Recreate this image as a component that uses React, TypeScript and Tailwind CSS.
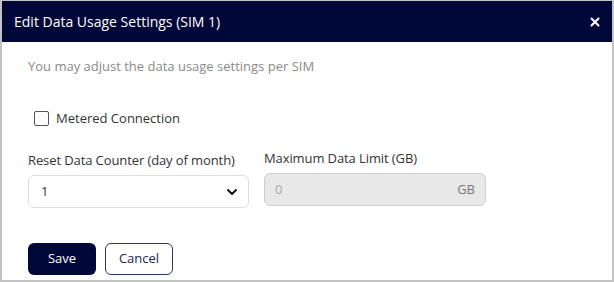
import { ChevronDown, X } from 'lucide-react';

function App() {
  return (
    <div className="w-[614px] h-[282px] bg-white border-2 border-t border-[#c3c3c3] font-['Open_Sans',sans-serif] flex flex-col">
      {/* Header */}
      <div className="h-[41px] bg-[#000839] flex items-center justify-between pl-[12px] pr-[10px] shrink-0">
        <h2 className="text-white text-[14px]">Edit Data Usage Settings (SIM 1)</h2>
        <X className="w-[14px] h-[14px] text-white" strokeWidth={3.5} />
      </div>

      {/* Body */}
      <div className="flex flex-col pl-[26px] pt-[14px]">
        <p className="text-[13px] text-[#8a8a8a] leading-[20px]">You may adjust the data usage settings per SIM</p>

        <label className="flex items-center gap-[7px] mt-[33px] ml-[6px]">
          <span className="w-[15px] h-[15px] border border-[#555] rounded-[2px] bg-white" />
          <span className="text-[13px] text-[#333] leading-[18px]">Metered Connection</span>
        </label>

        <div className="flex gap-[15px] mt-[24px]">
          <div className="flex flex-col w-[221px]">
            <span className="text-[13px] text-[#333] leading-[18px] tracking-[-0.1px]">Reset Data Counter (day of month)</span>
            <div className="mt-[6px] h-[33px] border border-[#dedede] rounded-[6px] flex items-center justify-between pl-[12px] pr-[8px]">
              <span className="text-[13px] text-[#333]">1</span>
              <ChevronDown className="w-[16px] h-[16px] text-[#111]" strokeWidth={3} />
            </div>
          </div>
          <div className="flex flex-col w-[222px] -mt-[2px]">
            <span className="text-[13px] text-[#333] leading-[18px] tracking-[-0.1px]">Maximum Data Limit (GB)</span>
            <div className="mt-[6px] h-[33px] border border-[#cfcfcf] bg-[#e9e8e8] rounded-[6px] flex items-center justify-between pl-[10px] pr-[10px]">
              <span className="text-[13px] text-[#a8a8a8]">0</span>
              <span className="text-[13px] text-[#777]">GB</span>
            </div>
          </div>
        </div>

        <div className="flex gap-[9px] mt-[35px]">
          <button className="w-[68px] h-[32px] rounded-[6px] bg-[#000839] text-white text-[13px]">Save</button>
          <button className="w-[68px] h-[32px] rounded-[6px] border border-[#2d3466] text-[#1d2550] text-[13px] bg-white">Cancel</button>
        </div>
      </div>
    </div>
  );
}

export default App;
